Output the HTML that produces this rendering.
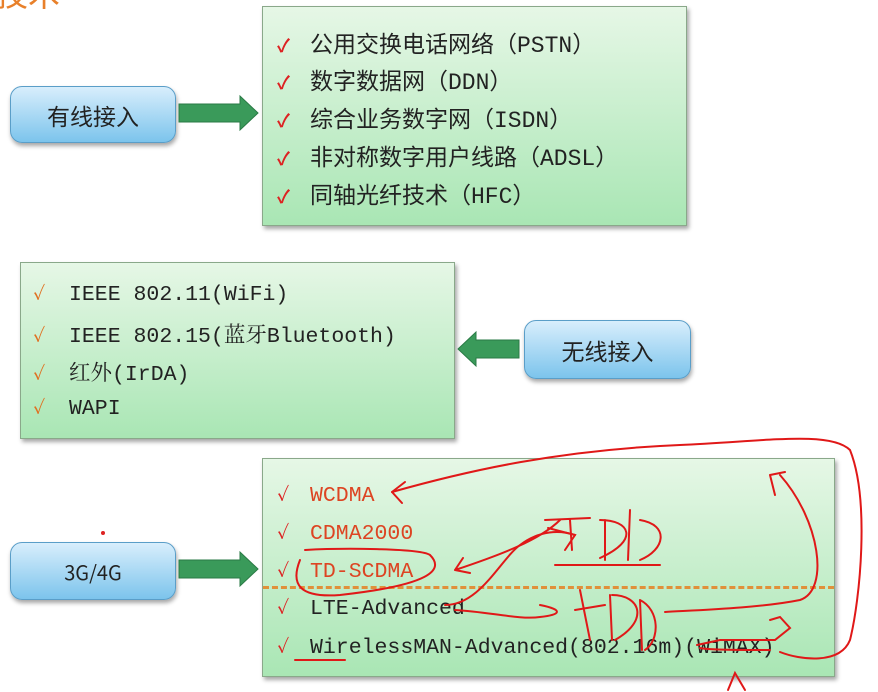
<!DOCTYPE html>
<html><head><meta charset="utf-8"><style>
body{margin:0;width:878px;height:692px;background:#fff;position:relative;overflow:hidden;font-family:"Liberation Sans","Noto Sans CJK SC",sans-serif}
.box{position:absolute;border:1.5px solid #8aa88a;background:linear-gradient(#e6f7e6,#a9e6b4);box-shadow:2px 3px 4px rgba(0,0,0,.35)}
.pill{position:absolute;border:1.5px solid #5a9ec8;border-radius:12px;background:linear-gradient(#d8eefc,#7cc4ec);box-shadow:1px 3px 4px rgba(0,0,0,.35);display:flex;align-items:center;justify-content:center;font-size:23px;color:#222;font-family:"Noto Sans CJK SC",sans-serif}
.l{position:absolute;white-space:nowrap;color:#222}
.t .l{font-size:23px;font-family:"Liberation Mono","Noto Sans CJK SC",monospace}
.m .l,.b .l{font-size:21.5px;font-family:"Liberation Mono","Noto Serif CJK SC",monospace}
.ck{display:inline-block;color:#d22;font-size:18px;width:33px;font-weight:bold}
.ck2{display:inline-block;color:#e07020;font-size:18px;width:36px;font-weight:bold}
</style></head><body>
<div class="l" style="left:-4px;top:-30px;font-size:32px;color:#e8802a;font-family:'Noto Sans CJK SC',sans-serif">技术</div>

<div class="box t" style="left:262px;top:6px;width:423px;height:218px">
<div class="l" style="left:14px;top:18px"><span class="ck">✓</span>公用交换电话网络（PSTN）</div>
<div class="l" style="left:14px;top:55px"><span class="ck">✓</span>数字数据网（DDN）</div>
<div class="l" style="left:14px;top:93px"><span class="ck">✓</span>综合业务数字网（ISDN）</div>
<div class="l" style="left:14px;top:131px"><span class="ck">✓</span>非对称数字用户线路（ADSL）</div>
<div class="l" style="left:14px;top:169px"><span class="ck">✓</span>同轴光纤技术（HFC）</div>
</div>
<div class="pill" style="left:10px;top:86px;width:164px;height:55px">有线接入</div>

<div class="box m" style="left:20px;top:262px;width:433px;height:175px">
<div class="l" style="left:12px;top:17px"><span class="ck2">✓</span>IEEE 802.11(WiFi)</div>
<div class="l" style="left:12px;top:55px"><span class="ck2">✓</span>IEEE 802.15(蓝牙Bluetooth)</div>
<div class="l" style="left:12px;top:93px"><span class="ck2">✓</span>红外(IrDA)</div>
<div class="l" style="left:12px;top:131px"><span class="ck2">✓</span>WAPI</div>
</div>
<div class="pill" style="left:524px;top:320px;width:165px;height:57px">无线接入</div>

<div class="box b" style="left:262px;top:458px;width:571px;height:217px">
<div class="l" style="left:14px;top:22px;color:#d42"><span class="ck">✓</span>WCDMA</div>
<div class="l" style="left:14px;top:60px;color:#d42"><span class="ck">✓</span>CDMA2000</div>
<div class="l" style="left:14px;top:98px;color:#d42"><span class="ck">✓</span>TD-SCDMA</div>
<div style="position:absolute;left:0;right:0;top:127px;border-top:3px dashed #e0903a"></div>
<div class="l" style="left:14px;top:135px"><span class="ck">✓</span>LTE-Advanced</div>
<div class="l" style="left:14px;top:174px"><span class="ck">✓</span>WirelessMAN-Advanced(802.16m)(WiMAX)</div>
</div>
<div class="pill" style="left:10px;top:542px;width:164px;height:56px;font-size:20px">3G/4G</div>

<svg width="878" height="692" style="position:absolute;left:0;top:0">
<g fill="#3a9a5a" stroke="#2a7a45" stroke-width="1">
<polygon points="179,104 240,104 240,96 258,113 240,130 240,122 179,122"/>
<polygon points="519,340 476,340 476,332 458,349 476,366 476,358 519,358"/>
<polygon points="179,560 240,560 240,552 258,569 240,586 240,578 179,578"/>
</g>
<g fill="none" stroke="#e01818" stroke-width="2" stroke-linecap="round">
<path d="M392,492 C470,470 560,450 680,445 C760,442 830,430 850,450 C870,500 860,600 850,640 C840,665 800,660 780,652"/>
<path d="M392,492 L405,482 M392,492 L402,503"/>
<path d="M455,570 C500,555 540,540 560,520 M455,570 L463,558 M455,570 L470,573"/>
<path d="M305,550 C340,548 420,548 430,555 C445,570 430,585 340,595 C300,598 290,585 300,560"/>
<path d="M445,605 C480,605 500,560 520,545 C540,530 560,530 575,535"/>
<path d="M455,610 C490,612 520,620 540,617 C560,615 565,610 540,605"/>
<path d="M548,528 L575,535 L565,550"/>
<path d="M545,520 L590,518 M570,520 L572,550 M600,520 C630,520 640,540 600,558 M605,520 L605,560 M630,510 L628,560 M640,520 C670,525 665,550 640,560"/>
<path d="M555,565 L660,565"/>
<path d="M580,590 L590,640 M575,610 L605,605 M610,595 L612,640 M612,595 C640,595 650,620 615,640 M640,600 L642,650 M640,600 C660,610 660,640 645,650"/>
<path d="M665,612 C700,610 760,608 800,600 C830,590 820,520 780,475 M770,475 L785,472 M770,475 L775,495"/>
<path d="M697,645 L720,640 L775,640 L790,628 L780,617 L770,620 M700,648 C710,650 740,650 770,650"/>
<path d="M728,690 L735,673 L745,690"/>
<path d="M295,660 L345,660"/>
</g>
<circle cx="103" cy="533" r="2" fill="#d22"/>
</svg>
</body></html>
